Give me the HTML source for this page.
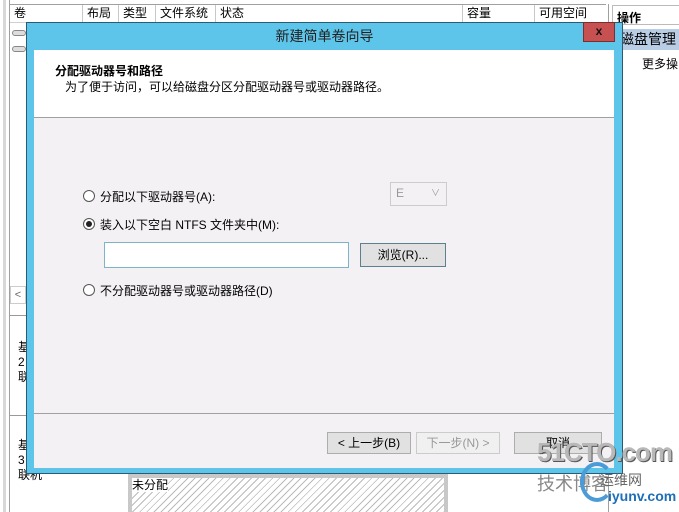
<!DOCTYPE html>
<html><head><meta charset="utf-8"><style>
*{margin:0;padding:0;box-sizing:border-box}
body{width:679px;height:512px;overflow:hidden;background:#fff;position:relative;font-family:"Liberation Sans","Noto Sans CJK SC",sans-serif;font-size:12px;color:#000}
.a{position:absolute}
.hd{top:4px;height:19px;border-top:1px solid #a0a0a0;border-bottom:1px solid #d0d0d0;background:#fff}
.col{position:absolute;top:5px;height:17px;border-left:1px solid #c8c8c8;padding-left:4px;font-size:12px;line-height:17px}
.btn{position:absolute;height:22px;border:1px solid #adadad;background:#e1e1e1;text-align:center;line-height:20px;font-size:12px}
.radio{position:absolute;width:12px;height:12px;border:1px solid #555;border-radius:50%;background:#fff}
</style></head><body>
<!-- background app -->
<div class="a" style="left:3px;top:0;width:3px;height:512px;background:#d8d8d8"></div>
<div class="a" style="left:9px;top:0;width:1px;height:512px;background:#a0a0a0"></div>
<div class="a hd" style="left:10px;width:596px"></div>
<div class="col" style="left:10px;border:none">卷</div>
<div class="col" style="left:82px">布局</div>
<div class="col" style="left:118px">类型</div>
<div class="col" style="left:155px">文件系统</div>
<div class="col" style="left:215px">状态</div>
<div class="col" style="left:462px">容量</div>
<div class="col" style="left:534px">可用空间</div>
<div class="a" style="left:12px;top:30px;width:14px;height:6px;border:1px solid #888;border-radius:3px;background:#ddd"></div>
<div class="a" style="left:12px;top:46px;width:14px;height:6px;border:1px solid #888;border-radius:3px;background:#ddd"></div>
<div class="a" style="left:10px;top:286px;width:16px;height:18px;border:1px solid #ccc;color:#666;font-size:11px;line-height:16px;text-align:center">&lt;</div>
<div class="a" style="left:10px;top:315px;width:16px;height:1px;background:#999"></div>
<div class="a" style="left:10px;top:415px;width:16px;height:1px;background:#999"></div>
<div class="a" style="left:18px;top:340px;line-height:15px;font-size:12px">基<br>2<br>联</div>
<div class="a" style="left:18px;top:438px;line-height:15px;font-size:12px">基<br>3<br>联机</div>
<div class="a" style="left:128px;top:474px;width:320px;height:38px;border:4px solid #c8c8c8;border-bottom:none;background:repeating-linear-gradient(135deg,#fff 0 4px,#bbb 4px 5px)"><span style="background:#fff;font-size:12px;line-height:10px">未分配</span></div>
<!-- right pane -->
<div class="a" style="left:608px;top:4px;width:71px;height:508px;border-left:1px solid #a0a0a0;background:#fff"></div>
<div class="a" style="left:612px;top:5px;width:67px;height:20px;border:1px solid #bbb;border-right:none;font-weight:bold;padding:3px 0 0 4px;font-size:12px">操作</div>
<div class="a" style="left:612px;top:29px;width:67px;height:21px;background:#b9cde5;font-size:14px;line-height:21px;padding-left:8px">磁盘管理</div>
<div class="a" style="left:642px;top:55px;font-size:12px">更多操</div>
<!-- dialog -->
<div class="a" style="left:26px;top:22px;width:597px;height:452px;background:#5ec5ea;border:1px solid #2c5a70"></div>
<div class="a" style="left:26px;top:23px;width:597px;text-align:center;font-size:14px;line-height:26px;color:#222">新建简单卷向导</div>
<div class="a" style="left:583px;top:22px;width:32px;height:20px;background:#c75050;border:1px solid #7a2e2e;color:#111;font-weight:bold;text-align:center;line-height:17px;font-size:12px">x</div>
<div class="a" style="left:34px;top:50px;width:580px;height:418px;background:#f4f1f5"></div>
<div class="a" style="left:34px;top:50px;width:580px;height:68px;background:#fff;border-bottom:1px solid #a0a0a0"></div>
<div class="a" style="left:55px;top:62px;font-weight:bold;font-size:12px">分配驱动器号和路径</div>
<div class="a" style="left:65px;top:78px;font-size:12px">为了便于访问，可以给磁盘分区分配驱动器号或驱动器路径。</div>
<div class="radio" style="left:83px;top:190px"></div>
<div class="a" style="left:100px;top:188px">分配以下驱动器号(A):</div>
<div class="a" style="left:390px;top:182px;width:57px;height:24px;border:1px solid #ccc;background:#f4f1f5;color:#999;padding:3px 0 0 5px">E<span style="position:absolute;right:6px;top:3px;font-size:9px">&#8744;</span></div>
<div class="radio" style="left:83px;top:218px"><div style="width:6px;height:6px;border-radius:50%;background:#222;margin:2px"></div></div>
<div class="a" style="left:100px;top:216px">装入以下空白 NTFS 文件夹中(M):</div>
<div class="a" style="left:104px;top:242px;width:245px;height:26px;background:#fff;border:1px solid #7fb3c9"></div>
<div class="btn" style="left:360px;top:243px;width:86px;height:24px;border-color:#5e7f8f;line-height:22px">浏览(R)...</div>
<div class="radio" style="left:83px;top:284px"></div>
<div class="a" style="left:100px;top:282px">不分配驱动器号或驱动器路径(D)</div>
<div class="a" style="left:34px;top:413px;width:580px;height:1px;background:#a0a0a0"></div>
<div class="btn" style="left:327px;top:432px;width:84px">&lt; 上一步(B)</div>
<div class="btn" style="left:416px;top:432px;width:84px;color:#999;background:#f0f0f0;border-color:#ccc">下一步(N) &gt;</div>
<div class="btn" style="left:514px;top:432px;width:88px">取消</div>
<!-- watermark -->
<div class="a" style="left:537px;top:437px;font-size:26px;font-weight:bold;color:#b8b8b8;letter-spacing:-1px;text-shadow:1px 1px 0 #555">51CTO.com</div>
<div class="a" style="left:537px;top:470px;font-size:18px;color:#888">技术博客</div>
<div class="a" style="left:600px;top:470px;font-size:14px;color:#666">运维网</div>
<div class="a" style="left:580px;top:462px;width:34px;height:40px;border:4px solid #4a9bd8;border-radius:50%;border-right-color:transparent"></div>
<div class="a" style="left:608px;top:488px;font-size:14px;font-weight:bold;color:#1e6fb8">iyunv.com</div>
</body></html>
